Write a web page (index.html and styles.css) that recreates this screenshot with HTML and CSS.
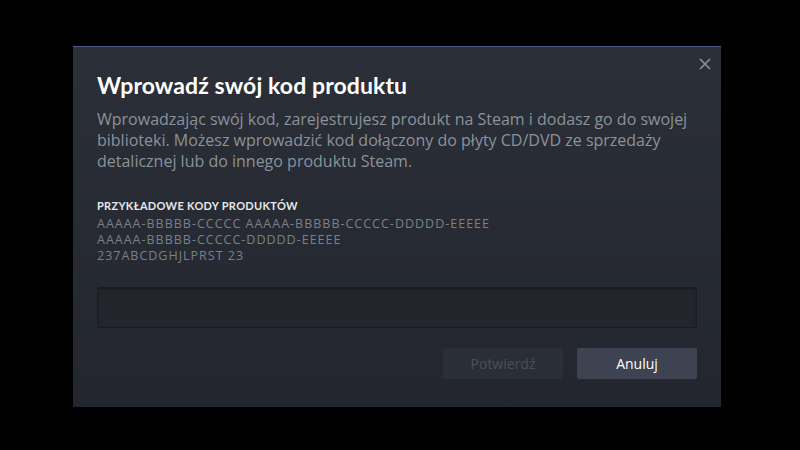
FILE: index.html
```html
<!DOCTYPE html>
<html lang="pl">
<head>
<meta charset="utf-8">
<link rel="stylesheet" href="styles.css">
</head>
<body>
<div class="stage">
  <div class="dialog">
    <button class="close" aria-label="Zamknij">
      <svg width="12" height="12" viewBox="0 0 12 12"><path d="M1 1L11 11M11 1L1 11" stroke="#8b929a" stroke-width="1.6" fill="none"/></svg>
    </button>
    <h1 class="title">Wprowadź swój kod produktu</h1>
    <p class="desc">Wprowadzając swój kod, zarejestrujesz produkt na Steam i dodasz go do swojej biblioteki. Możesz wprowadzić kod dołączony do płyty CD/DVD ze sprzedaży detalicznej lub do innego produktu Steam.</p>
    <div class="examples">
      <div class="ex-head">PRZYKŁADOWE KODY PRODUKTÓW</div>
      <div class="ex-line">AAAAA-BBBBB-CCCCC AAAAA-BBBBB-CCCCC-DDDDD-EEEEE</div>
      <div class="ex-line">AAAAA-BBBBB-CCCCC-DDDDD-EEEEE</div>
      <div class="ex-line">237ABCDGHJLPRST 23</div>
    </div>
    <input class="code-input" type="text">
    <div class="actions">
      <button class="btn btn-disabled">Potwierdź</button>
      <button class="btn btn-cancel">Anuluj</button>
    </div>
  </div>
</div>
</body>
</html>
```

FILE: styles.css
```css
html, body {
  margin: 0;
  padding: 0;
  background: #000;
  width: 800px;
  height: 450px;
  overflow: hidden;
}
.stage {
  padding: 46px 0 0 73px;
}
.dialog {
  position: relative;
  box-sizing: border-box;
  width: 648px;
  height: 361px;
  border-top: 1px solid #4b5a86;
  background: linear-gradient(to bottom, #2b2f37 0%, #23262e 100%);
  padding: 24px 24px 0 24px;
  font-family: "Open Sans", "Noto Sans", sans-serif;
}
.close {
  position: absolute;
  top: 11px;
  right: 10px;
  background: none;
  border: 0;
  padding: 0;
  width: 12px;
  height: 12px;
  display: flex;
}
.title {
  margin: 0;
  font-family: "Lato", sans-serif;
  font-weight: 700;
  font-size: 23px;
  letter-spacing: 0.1px;
  line-height: 28px;
  color: #ffffff;
}
.desc {
  margin: 10px 0 0 0;
  font-size: 16px;
  line-height: 21px;
  color: #8b929a;
}
.examples {
  margin-top: 26px;
}
.ex-head {
  font-family: "Lato", sans-serif;
  font-weight: 700;
  font-size: 11px;
  letter-spacing: 0.3px;
  color: #e6e7e9;
  line-height: 16px;
  margin-bottom: 2px;
}
.ex-line {
  font-size: 12.5px;
  letter-spacing: 1px;
  line-height: 16px;
  color: #7b8088;
}
.code-input {
  display: block;
  box-sizing: border-box;
  margin-top: 23px;
  width: 600px;
  height: 41px;
  background: #22252c;
  border: 1px solid #1a1c21;
  border-radius: 2px;
  box-shadow: inset 0 1px 2px rgba(0,0,0,0.3);
}
.actions {
  display: flex;
  justify-content: flex-end;
  gap: 14px;
  margin-top: 20px;
}
.btn {
  width: 120px;
  height: 31px;
  border: 0;
  border-radius: 2px;
  font-family: "Open Sans", sans-serif;
  font-size: 14px;
}
.btn-disabled {
  background: #2a2e36;
  color: #4b5058;
}
.btn-cancel {
  background: #3d4350;
  color: #ffffff;
}
```
